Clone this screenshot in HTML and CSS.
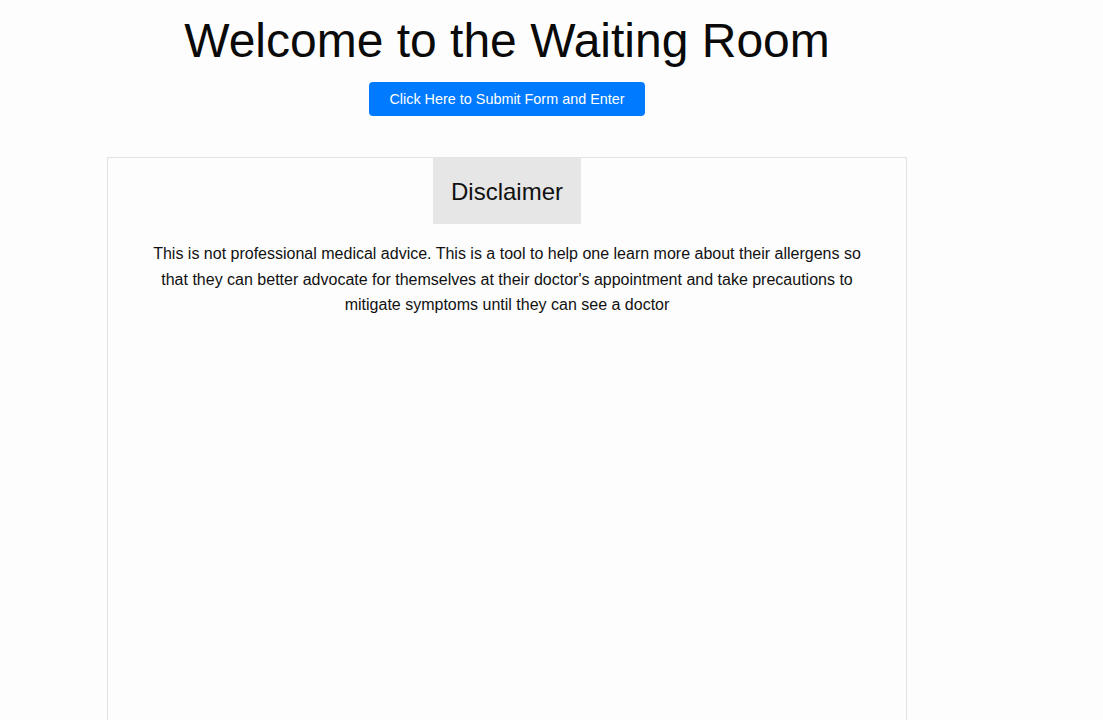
FILE: index.html
```html
<!DOCTYPE html>
<html lang="en">
<head>
<meta charset="utf-8">
<title>Waiting Room</title>
<link rel="stylesheet" href="styles.css">
</head>
<body>
<main class="page">
  <header class="top">
    <h1 class="title">Welcome to the Waiting Room</h1>
    <button class="enter-btn" type="button">Click Here to Submit Form and Enter</button>
  </header>
  <section class="panel">
    <h2 class="panel-title">Disclaimer</h2>
    <p class="panel-text">This is not professional medical advice. This is a tool to help one learn more about their allergens so that they can better advocate for themselves at their doctor's appointment and take precautions to mitigate symptoms until they can see a doctor</p>
  </section>
</main>
</body>
</html>
```
FILE: styles.css
```css
html, body {
  margin: 0;
  padding: 0;
  background: #fdfdfd;
}
body {
  font-family: "Liberation Sans", Arial, sans-serif;
  color: #111;
}
.page {
  width: 800px;
  margin-left: 107px;
  display: flex;
  flex-direction: column;
  align-items: center;
}
.top {
  display: flex;
  flex-direction: column;
  align-items: center;
}
.title {
  font-size: 48px;
  font-weight: 400;
  line-height: 55px;
  margin: 13px 0 14px;
  color: #0a0a0a;
}
.enter-btn {
  font-family: "Liberation Sans", Arial, sans-serif;
  font-size: 14.4px;
  line-height: 18px;
  padding: 8px 20px;
  background: #007bff;
  color: #fff;
  border: none;
  border-radius: 4px;
}
.panel {
  box-sizing: border-box;
  margin-top: 41px;
  width: 800px;
  height: 563px;
  border: 1px solid #e3e3e3;
  border-bottom: none;
  display: flex;
  flex-direction: column;
  align-items: center;
}
.panel-title {
  margin: -1px 0 0;
  font-size: 24px;
  font-weight: 400;
  line-height: 27px;
  padding: 21px 18px 19px;
  background: #e6e6e6;
  color: #111;
}
.panel-text {
  margin: 17px 0 0;
  padding: 0 45px;
  font-size: 16px;
  line-height: 25.6px;
  text-align: center;
  color: #111;
}
```
